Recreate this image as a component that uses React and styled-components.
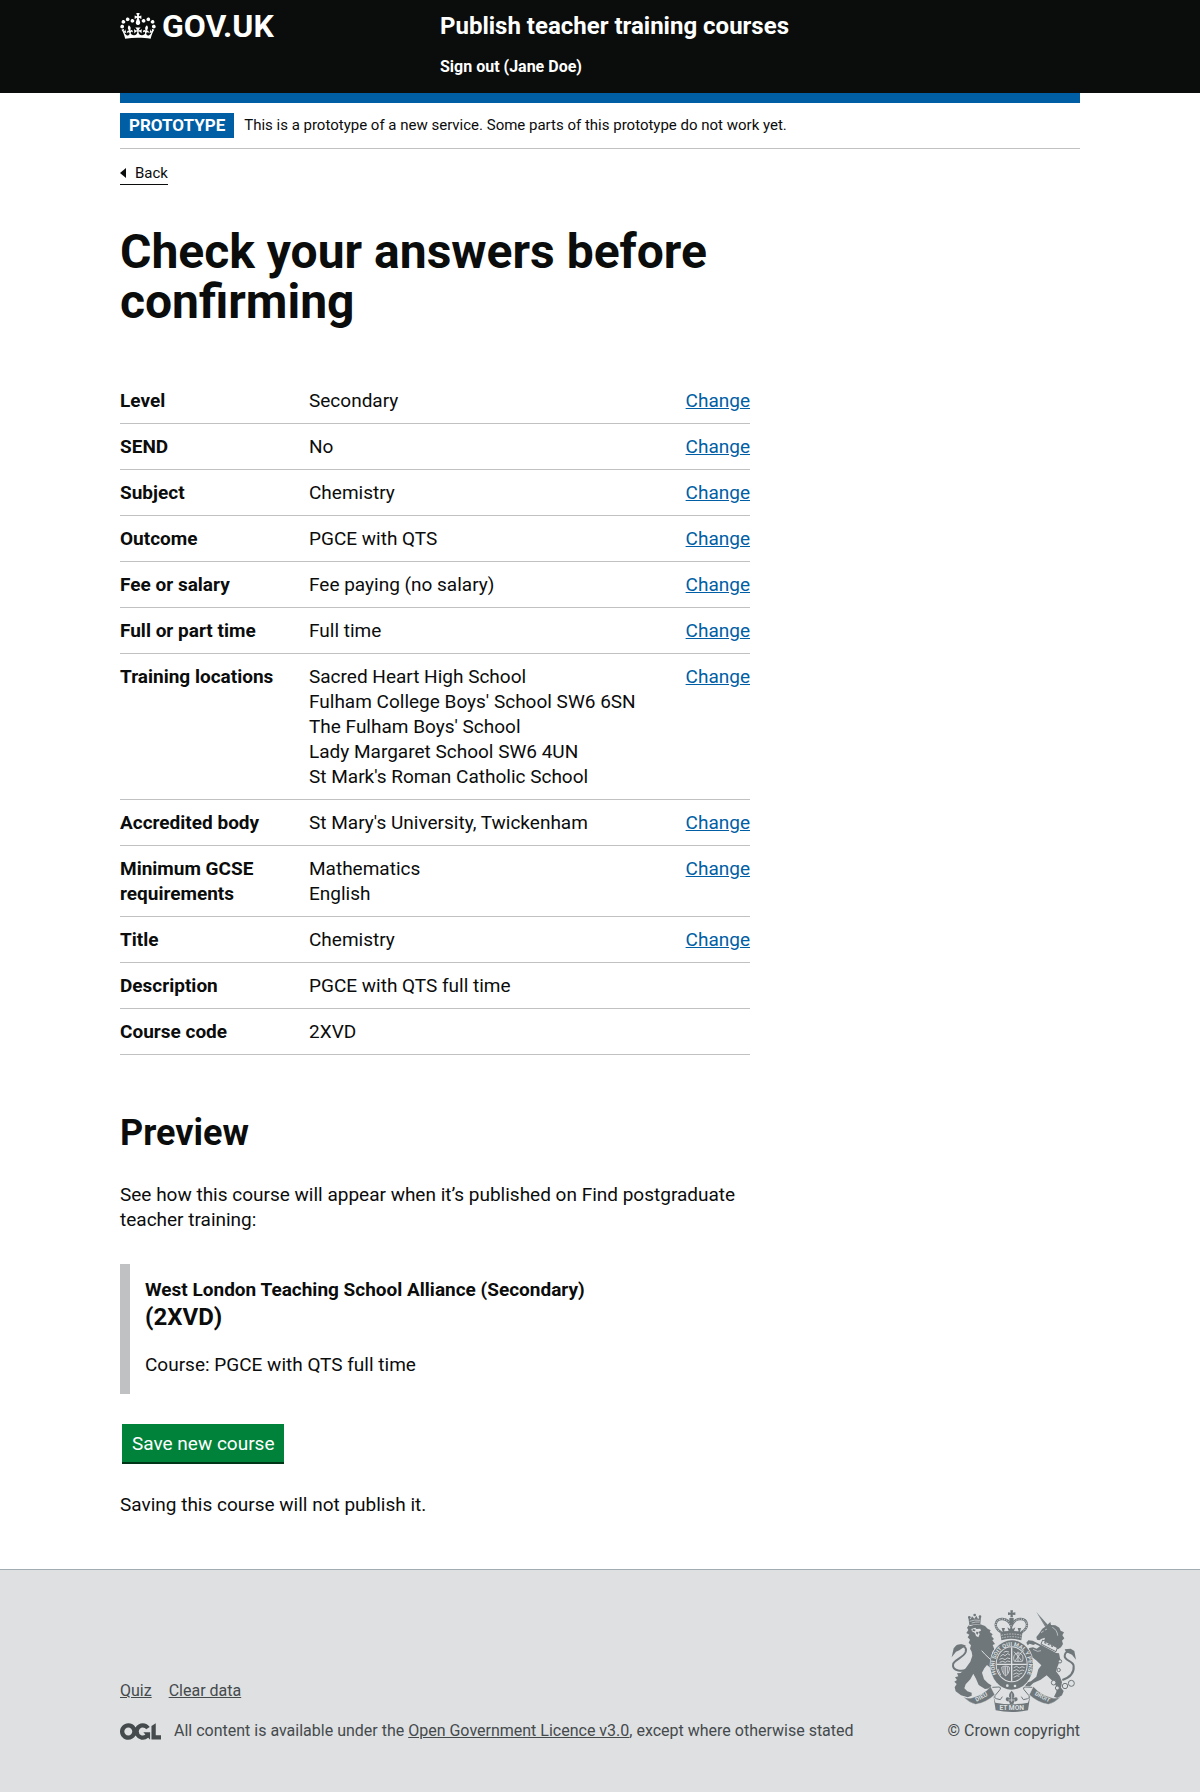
import React from 'react';
import styled, { createGlobalStyle } from 'styled-components';

const black = '#0b0c0c';
const blue = '#005ea5';
const line = '#bfc1c3';
const footerText = '#454a4c';
const footerBg = '#dee0e2';
const crestGrey = '#6f777b';

const GlobalStyle = createGlobalStyle`
  *, *::before, *::after { box-sizing: border-box; }
  body {
    margin: 0;
    background: #fff;
    color: ${black};
    font-family: Roboto, "Liberation Sans", Arial, sans-serif;
    font-size: 19px;
    line-height: 25px;
  }
  h1, h2, h3, p, dl, dd, ul { margin: 0; padding: 0; }
`;

const Container = styled.div`
  max-width: 1020px;
  margin: 0 auto;
  padding: 0 30px;
`;

const Header = styled.header`
  background: ${black};
  color: #fff;
`;

const HeaderRow = styled(Container)`
  display: grid;
  grid-template-columns: 1fr 2fr;
  padding-top: 11px;
  padding-bottom: 16px;
`;

const LogoLink = styled.a`
  display: flex;
  align-items: center;
  align-self: start;
  justify-self: start;
  gap: 6px;
  color: #fff;
  font-size: 32px;
  font-weight: 700;
  line-height: 30px;
  text-decoration: none;
`;

const ServiceNav = styled.nav`
  display: flex;
  flex-direction: column;
  align-items: flex-start;
  gap: 16px;
`;

const HeaderLink = styled.a`
  color: #fff;
  font-size: ${(p) => (p.$large ? '24px' : '16px')};
  line-height: ${(p) => (p.$large ? '30px' : '20px')};
  font-weight: 700;
  text-decoration: none;
`;

const PhaseBanner = styled.div`
  display: flex;
  align-items: center;
  gap: 10px;
  padding: 10px 0;
  border-top: 10px solid ${blue};
  border-bottom: 1px solid ${line};
  font-size: 15px;
`;

const PhaseTag = styled.strong`
  padding: 0 9px;
  background: ${blue};
  color: #fff;
  font-size: 17px;
  font-weight: 700;
  text-transform: uppercase;
`;

const BackLink = styled.a`
  display: inline-flex;
  align-items: center;
  gap: 9px;
  margin-top: 14px;
  padding-bottom: 1px;
  border-bottom: 1px solid ${black};
  color: ${black};
  font-size: 15px;
  line-height: 20px;
  text-decoration: none;

  &::before {
    content: '';
    border: solid transparent;
    border-width: 5px 6px 5px 0;
    border-right-color: ${black};
  }
`;

const Main = styled.main`
  display: flex;
  flex-direction: column;
  align-items: stretch;
  max-width: 630px;
  padding: 42px 0 52px;
`;

const PageTitle = styled.h1`
  margin-bottom: 51px;
  font-size: 48px;
  font-weight: 700;
  line-height: 50px;
`;

const SummaryList = styled.dl`
  margin-bottom: 58px;
`;

const SummaryRow = styled.div`
  display: grid;
  grid-template-columns: 30% 1fr auto;
  padding: 10px 0;
  border-bottom: 1px solid ${line};
`;

const SummaryKey = styled.dt`
  padding-right: 20px;
  font-weight: 700;
`;

const ValueLine = styled.div`
  display: block;
`;

const ChangeLink = styled.a`
  color: ${blue};
`;

const SectionTitle = styled.h2`
  margin-bottom: 29px;
  font-size: 36px;
  font-weight: 700;
  line-height: 40px;
`;

const Inset = styled.div`
  margin: 32px 0 30px;
  padding: 13px 15px 17px;
  border-left: 10px solid ${line};
`;

const CourseTitle = styled.h3`
  display: flex;
  flex-direction: column;
  margin-bottom: 20px;
  font-size: 19px;
  font-weight: 700;
`;

const CourseCode = styled.span`
  font-size: 24px;
  line-height: 30px;
`;

const SaveButton = styled.button`
  align-self: flex-start;
  height: 38px;
  margin: 0 2px 30px;
  padding: 0 10px;
  border: 0;
  background: #00823b;
  box-shadow: 0 2px 0 #003618;
  color: #fff;
  font: inherit;
  cursor: pointer;
`;

const Footer = styled.footer`
  border-top: 1px solid #a1acb2;
  background: ${footerBg};
  color: ${footerText};
  font-size: 16px;
  line-height: 20px;
`;

const FooterRow = styled(Container)`
  display: flex;
  align-items: flex-end;
  justify-content: space-between;
  padding-top: 40px;
  padding-bottom: 51px;
`;

const FooterMeta = styled.div`
  display: flex;
  flex-direction: column;
  gap: 20px;
`;

const FooterLinks = styled.ul`
  display: flex;
  gap: 17px;
  list-style: none;
`;

const FooterLink = styled.a`
  color: ${footerText};
`;

const Licence = styled.p`
  display: flex;
  align-items: center;
  gap: 13px;
`;

const CopyrightLink = styled.a`
  display: flex;
  flex-direction: column;
  align-items: center;
  gap: 9px;
  color: ${footerText};
  text-decoration: none;
`;

const CrestText = styled.text`
  fill: ${footerBg};
  font-family: Roboto, "Liberation Sans", sans-serif;
  font-size: ${(p) => p.$size}px;
  font-weight: 700;
  text-anchor: middle;
`;

const Crown = () => (
  <svg width="36" height="26" viewBox="0 0 132 97" fill="currentColor" aria-hidden="true">
    <path
      fillRule="evenodd"
      d="M25 30.2c3.5 1.5 7.7-.2 9.1-3.7 1.5-3.6-.2-7.8-3.9-9.2-3.6-1.4-7.6.3-9.1 3.9-1.4 3.5.3 7.5 3.9 9zM9 39.5c3.6 1.5 7.8-.2 9.2-3.7 1.5-3.6-.2-7.8-3.9-9.1-3.6-1.5-7.6.2-9.1 3.8-1.4 3.5.3 7.5 3.8 9zM4.4 57.2c3.5 1.5 7.7-.2 9.1-3.8 1.5-3.6-.2-7.7-3.9-9.1-3.5-1.5-7.6.3-9.1 3.8-1.4 3.5.3 7.6 3.9 9.1zm38.3-21.4c3.5 1.5 7.7-.2 9.1-3.8 1.5-3.6-.2-7.7-3.9-9.1-3.6-1.5-7.6.3-9.1 3.8-1.3 3.6.4 7.7 3.9 9.1zm64.4-5.6c-3.6 1.5-7.8-.2-9.1-3.7-1.5-3.6.2-7.8 3.8-9.2 3.6-1.4 7.7.3 9.2 3.9 1.3 3.5-.4 7.5-3.9 9zm15.9 9.3c-3.6 1.5-7.7-.2-9.1-3.7-1.5-3.6.2-7.8 3.7-9.1 3.6-1.5 7.7.2 9.2 3.8 1.5 3.5-.3 7.5-3.8 9zm4.7 17.7c-3.6 1.5-7.8-.2-9.2-3.8-1.5-3.6.2-7.7 3.9-9.1 3.6-1.5 7.7.3 9.2 3.8 1.3 3.5-.4 7.6-3.9 9.1zM89.3 35.8c-3.6 1.5-7.8-.2-9.2-3.8-1.4-3.6.2-7.7 3.9-9.1 3.6-1.5 7.7.3 9.2 3.8 1.4 3.6-.3 7.7-3.9 9.1zM69.7 17.7l8.9 4.7V9.3l-8.9 2.8c-.2-.3-.5-.6-.9-.9L72.4 0H59.6l3.5 11.2c-.3.3-.6.5-.9.9l-8.8-2.8v13.1l8.8-4.7c.3.3.6.7.9.9l-5 15.4v.1c-.2.8-.4 1.6-.4 2.4 0 4.1 3.1 7.5 7 8.1h.2c.3 0 .7.1 1 .1.4 0 .7 0 1-.1h.2c4-.6 7.1-4.1 7.1-8.1 0-.8-.1-1.7-.4-2.4V34l-5.1-15.4c.4-.2.7-.6 1-.9zM66 92.8c16.9 0 32.8 1.1 47.1 3.2 4-16.9 8.9-26.7 14-33.5l-9.6-3.4c1 4.9 1.1 7.2 0 10.2-1.5-1.4-3-4.3-4.2-8.7L108.6 76c2.8-2 5-3.2 7.5-3.3-4.4 9.4-10 11.9-13.6 11.2-4.3-.8-6.3-4.6-5.6-7.9 1-4.7 5.7-5.9 8-.5 4.3-8.7-3-11.4-7.6-8.8 7.1-7.2 7.9-13.5 2.1-21.1-8 6.1-8.1 12.3-4.5 20.8-4.7-5.4-12.1-2.5-9.5 6.2 3.4-5.2 7.9-2 7.2 3.1-.6 4.3-6.4 7.8-13.5 7.2-10.3-.9-10.9-8-11.2-13.8 2.5-.5 7.1 1.8 11 7.3L80.2 60c-4.1 4.4-8 5.3-12.3 5.4 1.4-4.4 8-11.6 8-11.6H55.5s6.4 7.2 7.9 11.6c-4.2-.1-8-1-12.3-5.4l1.4 16.4c3.9-5.5 8.5-7.7 10.9-7.3-.3 5.8-.9 12.8-11.1 13.8-7.2.6-12.9-2.9-13.5-7.2-.7-5 3.8-8.3 7.1-3.1 2.7-8.7-4.6-11.6-9.4-6.2 3.7-8.5 3.6-14.7-4.6-20.8-5.8 7.6-5 13.9 2.2 21.1-4.7-2.6-11.9.1-7.7 8.8 2.3-5.5 7.1-4.2 8.1.5.7 3.3-1.3 7.1-5.7 7.9-3.5.7-9-1.8-13.5-11.2 2.5.1 4.7 1.3 7.5 3.3l-4.7-15.4c-1.2 4.4-2.7 7.2-4.3 8.7-1.1-3-.9-5.3 0-10.2l-9.5 3.4c5 6.9 9.9 16.7 14 33.5 14.8-2.1 30.8-3.2 47.7-3.2z"
    />
  </svg>
);

const OglLogo = () => (
  <svg width="41" height="17" viewBox="0 0 483.2 195.7" fill="currentColor" role="img" aria-label="OGL">
    <path d="M421.5 142.8V.1l-50.7 32.3v161.1h112.4v-50.7zm-122.3-9.6A47.12 47.12 0 0 1 221 97.8c0-26 21.1-47.1 47.1-47.1 16.7 0 31.4 8.7 39.7 21.8l42.7-27.2A97.63 97.63 0 0 0 268.1 0c-36.5 0-68.3 20.1-85.1 49.7A98 98 0 0 0 97.8 0C43.9 0 0 43.9 0 97.8s43.9 97.8 97.8 97.8c36.5 0 68.3-20.1 85.1-49.7a97.76 97.76 0 0 0 149.6 25.4l19.4 22.2h3v-87.8h-80l24.3 27.5zM97.8 145c-26 0-47.1-21.1-47.1-47.1s21.1-47.1 47.1-47.1 47.1 21.1 47.1 47.1S123.8 145 97.8 145" />
  </svg>
);

const Crest = () => (
  <svg width="125" height="102" viewBox="36 30 375 306" fill={crestGrey} aria-hidden="true">
    <defs>
      <path id="garter" d="M187 242A51 58 0 1 1 249 242" />
    </defs>
    {/* lion */}
    <path d="M88 51l7 7 4-9 7 7 6-9 5 10 9-7-2 22-33 3-3-24z" />
    <circle cx="91" cy="52" r="4" />
    <circle cx="107" cy="45" r="4" />
    <circle cx="123" cy="50" r="4" />
    <path d="M92 64q14-6 31-3M98 69q12-4 24-3" fill="none" stroke={footerBg} strokeWidth="2" />
    <path d="M92 79l12-4 20-2 14 5 8 8 9 5-3 5 9 7-4 5 8 9-5 4 8 11-7 3 5 13-6 8-3 14 10 15-3 14-10 4-10-8-8 10-7 13 6 20 12 12 10 6-2 9-17 2-19-12-8-19-8-15-9 17-14 15-4 12 9 9 13 4 0 9-12 5-20-6-16-12-3-12 6-10-7-7 8-5-6-8 10-3-4-9 11-1 15-14 14-20 6-18-2-12-5-9 3-10-7-8 4-9-7-7 5-8-9-5 6-9-4-7 6-8z" />
    <path d="M97 87l12-4 3 4 12-1 2 6-7 3 3 8-4 9-7-4-3-9-9-5z" fill={footerBg} />
    <path d="M102 87l8 2-2 5-8-2zM111 95l8 1-3 8-4-3z" />
    <path d="M128 152q8 10 26 26" fill="none" stroke={footerBg} strokeWidth="3" />
    <path d="M91 207c-22 10-51 6-49-13 1-14 31-20 38-38 4-13-5-20-17-18" fill="none" stroke={crestGrey} strokeWidth="6" />
    <path d="M81 137c-15-7-26-5-31 1l-6 7-6 27 13-17 10-4 13-9z" />
    {/* unicorn */}
    <path d="M292 36l34 38-7 7z" />
    <path d="M296 41l24 36" stroke={footerBg} strokeWidth="1" strokeDasharray="4 3" />
    <path d="M334 66l2 9 13 1 12 7 4 9 10 5-5 9 6 9-7 7 3 10-6 10-9 6-44-20 5-15-10 3-7 5-7-2-2-8 8-10 10-15 9-6z" />
    <path d="M306 98l8-5M318 90l6-3M340 82q15 8 16 25" stroke={footerBg} strokeWidth="2" fill="none" />
    <path d="M302 133l12 6 38 20 8 1 4 19-8 20-5 15 11 14 7 18-3 17 8 10-5 13-13 9-11-5 7-14 1-16-13-18-17-16-18 13-22 10-10 10-14-1 2-10 15-4 16-14 6-22 9-12-14-14-11-9-10 4-5-8-10-6-2-15 10 2 6-6 11-2 11 4 10-7-14-7-6 3-11-4-6 5-4-8 6-7 13 1z" />
    <path d="M311 120l44 23-4 12-45-23z" fill={footerBg} stroke={crestGrey} strokeWidth="3" />
    <path d="M316 127l6 3M326 132l6 3M336 137l6 3" stroke={crestGrey} strokeWidth="4" />
    <path d="M282 148l14 6 10-2" fill="none" stroke={footerBg} strokeWidth="2" />
    <path d="M370 240c24-8 36-20 34-42-1-16-29-15-27-31 1-12 12-15 20-9" fill="none" stroke={crestGrey} strokeWidth="6" />
    <path d="M377 148l18-2 11 7 5 26-12-15-18-8z" />
    <g fill={footerBg} stroke={crestGrey} strokeWidth="3">
      <circle cx="363" cy="184" r="5" />
      <circle cx="359" cy="210" r="5" />
      <circle cx="344" cy="248" r="7" />
      <circle cx="355" cy="264" r="6" />
      <circle cx="378" cy="258" r="8" />
      <circle cx="397" cy="250" r="9" />
    </g>
    {/* royal crown */}
    <path d="M214 31h8l-1 7 8-1v8l-8-1 1 8h-8l1-8-8 1v-8l8 1z" />
    <path d="M186 97C160 80 170 58 188 57c14-1 24 9 29 22 5-13 15-23 29-22 18 1 28 23 2 40" fill="none" stroke={crestGrey} strokeWidth="7" />
    <path d="M186 97C160 80 170 58 188 57c14-1 24 9 29 22 5-13 15-23 29-22 18 1 28 23 2 40" fill="none" stroke={footerBg} strokeWidth="3" strokeDasharray="3 4" />
    <path d="M211 54h13v13l-3 9h-7l-3-9z" />
    <path d="M183 92l8 4-3-12h10l-3 10 14-1-4-11 8 5 4-10 4 10 8-5-4 11 14 1-3-10h10l-3 12 8-4-4 29q-32-9-60 0z" />
    <path d="M187 106q30-8 61 0M188 114q30-8 59 0" fill="none" stroke={footerBg} strokeWidth="2" strokeDasharray="5 3" />
    {/* garter and shield */}
    <ellipse cx="218" cy="195" rx="66" ry="77" fill={footerBg} />
    <ellipse cx="218" cy="195" rx="64" ry="74" />
    <CrestText $size={17}>
      <textPath href="#garter" startOffset="50%">HONI SOIT QUI MAL Y PENSE</textPath>
    </CrestText>
    <ellipse cx="218" cy="193" rx="48" ry="54" fill={footerBg} />
    <ellipse cx="218" cy="193" rx="45" ry="51" />
    <g fill="none" stroke={footerBg} strokeWidth="2.5">
      <path d="M218 142v102M173 193h90" strokeWidth="4" />
      <path d="M184 169l8-6 6 4 8-6 7 4M181 178l9-3 8 4 7-5 9 2M182 187l9-3 8 3 7-4 8 2M194 157l7-3 9 2" />
      <path d="M225 155l22 26M248 156l-20 27M226 184c-5-13 0-25 12-25s17 12 12 25zM237 155v30" />
      <path d="M188 202c7-5 17-5 24 0-1 15-7 22-12 26-6-5-11-13-12-26zM195 200v21M200 199v28M206 200v20M177 207l8 18" />
      <path d="M224 203l9-4 8 5 8-4 8 3M223 213l10-4 8 5 8-4 7 2M223 223l9-4 8 4 10-4M224 232l10-5 7 2" />
    </g>
    <circle cx="205" cy="257" r="4" fill={footerBg} />
    <circle cx="228" cy="258" r="4" fill={footerBg} />
    {/* fleur-de-lis */}
    <path d="M218 272q13 13 5 23 12-8 13 3-1 8-10 6l-3 9h-10l-3-9q-9 2-10-6 1-11 13-3-8-10 5-23z" />
    <path d="M218 280v26M208 300h20" stroke={footerBg} strokeWidth="2" />
    {/* motto ribbon */}
    <path d="M160 262l20-1q8 1 3 8l-15 18q-4 7 4 9l12 3 6-9" fill={footerBg} stroke={crestGrey} strokeWidth="3" />
    <path d="M280 262l-22-1q-8 1-3 8l15 18q4 7-4 9l-13 3-6-9" fill={footerBg} stroke={crestGrey} strokeWidth="3" />
    <path d="M73 290q12 7 25 4 34-9 57-34l12 24q-24 23-57 29-20-5-37-23z" stroke={footerBg} />
    <path d="M365 290q-12 7-25 4-34-9-57-34l-12 24q24 23 57 29 20-5 37-23z" stroke={footerBg} />
    <path d="M163 286l7 45q48 10 97 0l7-45-7 22q-49 9-98 0z" />
    <CrestText $size={18} transform="translate(130 296) rotate(-28)">DIEU</CrestText>
    <CrestText $size={20} x="218" y="330">ET MON</CrestText>
    <CrestText $size={17} transform="translate(308 296) rotate(28)">DROIT</CrestText>
  </svg>
);

const answers = [
  { key: 'Level', values: ['Secondary'], change: true },
  { key: 'SEND', values: ['No'], change: true },
  { key: 'Subject', values: ['Chemistry'], change: true },
  { key: 'Outcome', values: ['PGCE with QTS'], change: true },
  { key: 'Fee or salary', values: ['Fee paying (no salary)'], change: true },
  { key: 'Full or part time', values: ['Full time'], change: true },
  {
    key: 'Training locations',
    values: [
      'Sacred Heart High School',
      "Fulham College Boys' School SW6 6SN",
      "The Fulham Boys' School",
      'Lady Margaret School SW6 4UN',
      "St Mark's Roman Catholic School",
    ],
    change: true,
  },
  { key: 'Accredited body', values: ["St Mary's University, Twickenham"], change: true },
  { key: 'Minimum GCSE requirements', values: ['Mathematics', 'English'], change: true },
  { key: 'Title', values: ['Chemistry'], change: true },
  { key: 'Description', values: ['PGCE with QTS full time'] },
  { key: 'Course code', values: ['2XVD'] },
];

export default function App() {
  return (
    <>
      <GlobalStyle />
      <Header>
        <HeaderRow>
          <LogoLink href="#">
            <Crown />
            GOV.UK
          </LogoLink>
          <ServiceNav>
            <HeaderLink $large href="#">Publish teacher training courses</HeaderLink>
            <HeaderLink href="#">Sign out (Jane Doe)</HeaderLink>
          </ServiceNav>
        </HeaderRow>
      </Header>
      <Container>
        <PhaseBanner>
          <PhaseTag>Prototype</PhaseTag>
          <span>This is a prototype of a new service. Some parts of this prototype do not work yet.</span>
        </PhaseBanner>
        <BackLink href="#">Back</BackLink>
        <Main>
          <PageTitle>Check your answers before confirming</PageTitle>
          <SummaryList>
            {answers.map(({ key, values, change }) => (
              <SummaryRow key={key}>
                <SummaryKey>{key}</SummaryKey>
                <dd>
                  {values.map((value) => (
                    <ValueLine key={value}>{value}</ValueLine>
                  ))}
                </dd>
                {change && (
                  <dd>
                    <ChangeLink href="#" aria-label={`Change ${key}`}>Change</ChangeLink>
                  </dd>
                )}
              </SummaryRow>
            ))}
          </SummaryList>
          <SectionTitle>Preview</SectionTitle>
          <p>See how this course will appear when it’s published on Find postgraduate teacher training:</p>
          <Inset>
            <CourseTitle>
              West London Teaching School Alliance (Secondary)
              <CourseCode>(2XVD)</CourseCode>
            </CourseTitle>
            <p>Course: PGCE with QTS full time</p>
          </Inset>
          <SaveButton type="button">Save new course</SaveButton>
          <p>Saving this course will not publish it.</p>
        </Main>
      </Container>
      <Footer>
        <FooterRow>
          <FooterMeta>
            <FooterLinks>
              <li><FooterLink href="#">Quiz</FooterLink></li>
              <li><FooterLink href="#">Clear data</FooterLink></li>
            </FooterLinks>
            <Licence>
              <OglLogo />
              <span>
                All content is available under the <FooterLink href="#">Open Government Licence v3.0</FooterLink>, except
                where otherwise stated
              </span>
            </Licence>
          </FooterMeta>
          <CopyrightLink href="#">
            <Crest />
            <span>© Crown copyright</span>
          </CopyrightLink>
        </FooterRow>
      </Footer>
    </>
  );
}
